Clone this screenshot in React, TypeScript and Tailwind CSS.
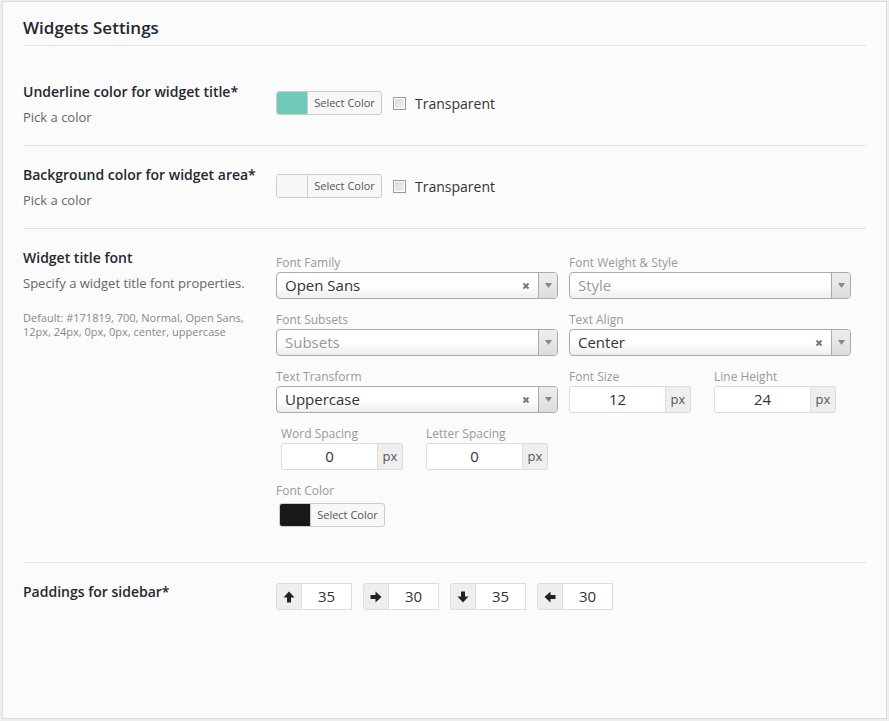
import React from 'react';

const font = { fontFamily: '"Open Sans", "Liberation Sans", sans-serif' };

const ColorPicker: React.FC<{ color: string; className?: string }> = ({ color, className = '' }) => (
  <div className={`flex h-[24px] w-[106px] overflow-hidden rounded-[3px] border border-[#cccccc] bg-[#f7f7f7] ${className}`}>
    <div className="w-[31px] border-r border-[#cccccc]" style={{ backgroundColor: color }} />
    <div className="flex flex-1 items-center justify-center text-[11px] text-[#555]">Select Color</div>
  </div>
);

const Transparent: React.FC = () => (
  <label className="ml-[11px] flex items-center gap-[9px] text-[14px] text-[#333]">
    <span className="h-[13px] w-[13px] border border-[#999] bg-linear-to-br from-[#d8d8d8] to-[#f4f4f4] shadow-[inset_0_0_0_1px_#fff]" />
    Transparent
  </label>
);

const Clear: React.FC = () => (
  <svg width="8" height="8" viewBox="0 0 8 8" className="mr-[8px]">
    <path d="M1.5 1.5 L6.5 6.5 M6.5 1.5 L1.5 6.5" stroke="#777" strokeWidth="2" />
  </svg>
);

const Select: React.FC<{ value: string; placeholder?: boolean; clearable?: boolean }> = ({
  value,
  placeholder = false,
  clearable = false
}) => (
  <div className="flex h-[27px] w-full items-stretch overflow-hidden rounded-[4px] border border-[#aaaaaa] bg-linear-to-b from-white from-50% to-[#eeeeee]">
    <div className={`flex flex-1 items-center pl-[8px] text-[15px] ${placeholder ? 'text-[#999]' : 'text-[#333]'}`}>
      {value}
    </div>
    {clearable && (
      <div className="flex items-center">
        <Clear />
      </div>
    )}
    <div className="flex w-[19px] items-center justify-center border-l border-[#aaaaaa] bg-linear-to-b from-[#eeeeee] to-[#dddddd]">
      <svg width="7" height="5" viewBox="0 0 7 5">
        <path d="M0 0 H7 L3.5 5 Z" fill="#888" />
      </svg>
    </div>
  </div>
);

const FieldLabel: React.FC<{ children: React.ReactNode; className?: string }> = ({ children, className = 'mb-[1px]' }) => (
  <div className={`h-[18px] pt-[2px] text-[12px] leading-[16px] text-[#999] ${className}`}>{children}</div>
);

const NumberField: React.FC<{ value: string }> = ({ value }) => (
  <div className="flex h-[27px] w-[122px]">
    <div className="flex w-[97px] items-center justify-center rounded-l-[3px] border border-[#dddddd] bg-white text-[15px] text-[#333]">
      {value}
    </div>
    <div className="flex w-[25px] items-end justify-center rounded-r-[3px] border border-l-0 border-[#dddddd] bg-[#eeeeee] pb-[3px] text-[13px] text-[#555]">
      px
    </div>
  </div>
);

const Arrow: React.FC<{ dir: 'up' | 'right' | 'down' | 'left' }> = ({ dir }) => {
  const rot = { up: 0, right: 90, down: 180, left: 270 }[dir];
  return (
    <svg width="12" height="12" viewBox="0 0 12 12" style={{ transform: `rotate(${rot}deg)` }}>
      <path d="M6 0.5 L11.5 6.5 H8 V11.5 H4 V6.5 H0.5 Z" fill="#222" />
    </svg>
  );
};

const PaddingField: React.FC<{ dir: 'up' | 'right' | 'down' | 'left'; value: string }> = ({ dir, value }) => (
  <div className="flex h-[27px]">
    <div className="flex w-[26px] items-center justify-center rounded-l-[3px] border border-[#dddddd] bg-[#eeeeee]">
      <Arrow dir={dir} />
    </div>
    <div className="flex w-[50px] items-center justify-center border border-l-0 border-[#dddddd] bg-white text-[15px] text-[#333]">
      {value}
    </div>
  </div>
);

const RowLabel: React.FC<{ title: string; desc?: string }> = ({ title, desc }) => (
  <div className="w-[253px] shrink-0">
    <div className="text-[14px] font-semibold leading-[20px] text-[#23282d]">{title}</div>
    {desc && <div className="mt-[5px] text-[13px] leading-[20px] text-[#666]">{desc}</div>}
  </div>
);

export default function App() {
  return (
    <div className="h-[721px] w-[889px] bg-[#eeeeee] px-[2px] pb-[2px] pt-[1px]" style={font}>
      <div className="h-[718px] border border-[#dddddd] bg-[#fbfbfb] pl-[20px] pr-[20px]">
        <div className="border-b border-[#e2e2e2] pb-[5px] pt-[14px] text-[17px] font-semibold leading-[24px] text-[#23282d]">
          Widgets Settings
        </div>

        <div className="flex border-b border-[#e2e2e2] pb-[18px] pt-[36px]">
          <RowLabel title="Underline color for widget title*" desc="Pick a color" />
          <div className="mt-[9px] flex items-center self-start">
            <ColorPicker color="#71c9b8" />
            <Transparent />
          </div>
        </div>

        <div className="flex border-b border-[#e2e2e2] pb-[18px] pt-[19px]">
          <RowLabel title="Background color for widget area*" desc="Pick a color" />
          <div className="mt-[9px] flex items-center self-start">
            <ColorPicker color="#f7f7f7" />
            <Transparent />
          </div>
        </div>

        <div className="flex border-b border-[#e2e2e2] pb-[35px] pt-[19px]">
          <div className="w-[253px] shrink-0">
            <div className="text-[14px] font-semibold leading-[20px] text-[#23282d]">Widget title font</div>
            <div className="mt-[5px] text-[13px] leading-[20px] text-[#666]">
              Specify a widget title font properties.
            </div>
            <div className="mt-[18px] text-[11px] leading-[14px] text-[#888]">
              Default: #171819, 700, Normal, Open Sans,
              <br />
              12px, 24px, 0px, 0px, center, uppercase
            </div>
          </div>
          <div className="mt-[5px] w-[575px]">
            <div className="grid grid-cols-2 gap-x-[11px] gap-y-[11px]">
              <div>
                <FieldLabel>Font Family</FieldLabel>
                <Select value="Open Sans" clearable />
              </div>
              <div>
                <FieldLabel>Font Weight &amp; Style</FieldLabel>
                <Select value="Style" placeholder />
              </div>
              <div>
                <FieldLabel>Font Subsets</FieldLabel>
                <Select value="Subsets" placeholder />
              </div>
              <div>
                <FieldLabel>Text Align</FieldLabel>
                <Select value="Center" clearable />
              </div>
              <div>
                <FieldLabel>Text Transform</FieldLabel>
                <Select value="Uppercase" clearable />
              </div>
              <div className="flex gap-[23px]">
                <div>
                  <FieldLabel>Font Size</FieldLabel>
                  <NumberField value="12" />
                </div>
                <div>
                  <FieldLabel>Line Height</FieldLabel>
                  <NumberField value="24" />
                </div>
              </div>
            </div>
            <div className="mt-[11px] flex gap-[23px] pl-[5px]">
              <div>
                <FieldLabel>Word Spacing</FieldLabel>
                <NumberField value="0" />
              </div>
              <div>
                <FieldLabel>Letter Spacing</FieldLabel>
                <NumberField value="0" />
              </div>
            </div>
            <div className="mt-[11px]">
              <FieldLabel className="mb-[4px]">Font Color</FieldLabel>
              <ColorPicker color="#171819" className="ml-[3px]" />
            </div>
          </div>
        </div>

        <div className="flex pt-[19px]">
          <RowLabel title="Paddings for sidebar*" />
          <div className="mt-[1px] flex gap-[11px] self-start">
            <PaddingField dir="up" value="35" />
            <PaddingField dir="right" value="30" />
            <PaddingField dir="down" value="35" />
            <PaddingField dir="left" value="30" />
          </div>
        </div>
      </div>
    </div>
  );
}
